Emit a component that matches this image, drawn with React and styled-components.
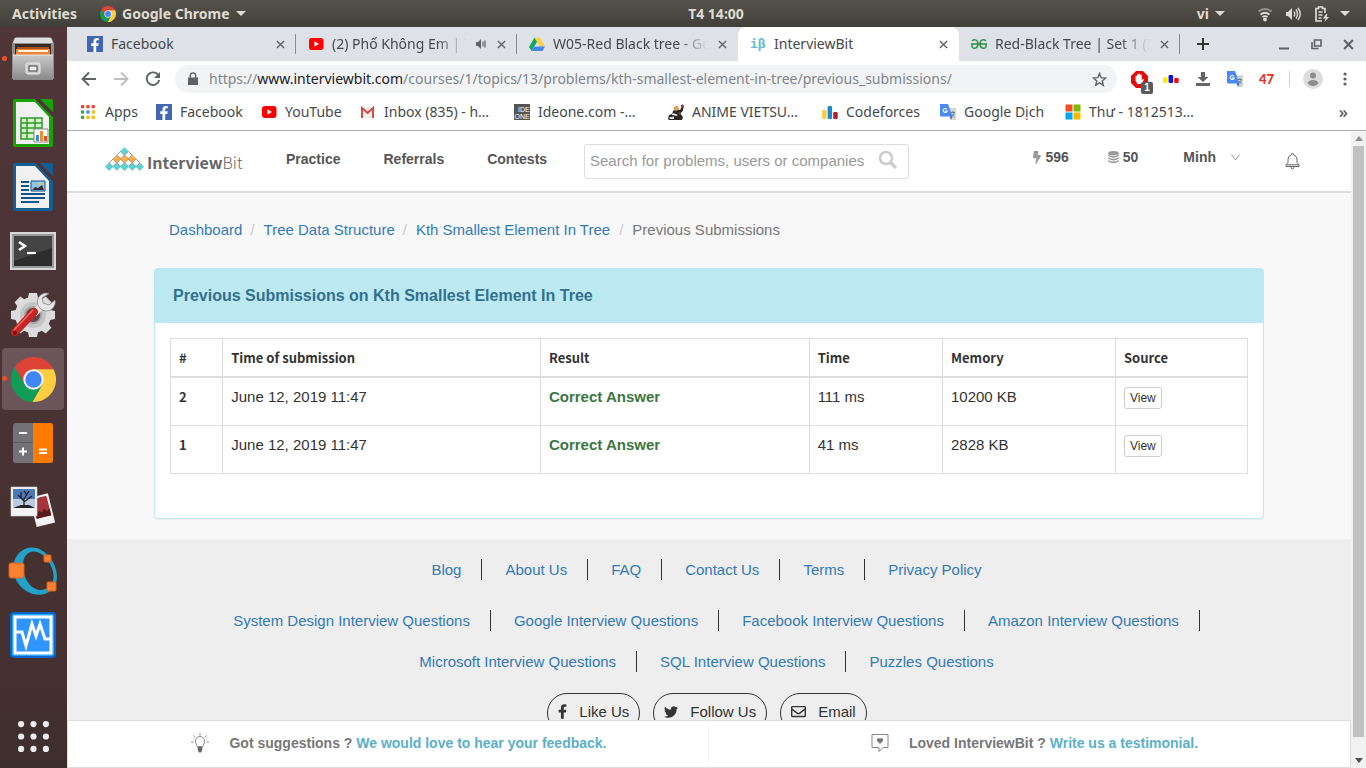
import React from "react";
import styled, { createGlobalStyle } from "styled-components";
import { FaFacebookF, FaTwitter, FaBolt, FaRegEnvelope } from "react-icons/fa";

const UI = `"Noto Sans", "Open Sans", sans-serif`;
const WEB = `"Liberation Sans", Arial, sans-serif`;

const Global = createGlobalStyle`
  * { box-sizing: border-box; }
  html, body { margin: 0; height: 100%; }
  #root { height: 100%; }
  body { font-family: ${WEB}; font-size: 15px; color: #333; overflow: hidden; }
  button, input { font: inherit; color: inherit; }
  button { background: none; border: 0; padding: 0; }
  svg { display: block; flex: none; }
  a { text-decoration: none; color: #337ab7; }
`;

/* ---------- desktop ---------- */
const Desktop = styled.div`
  display: flex; flex-direction: column; height: 100vh; background: #40302f;
`;
const TopBar = styled.header`
  display: grid; grid-template-columns: 1fr auto 1fr; align-items: center; flex: none;
  height: 27px; padding: 0 16px 0 12px;
  background: linear-gradient(#56534b, #403f3a);
  color: #dfdbd2; font: 700 14px/20px ${UI};
`;
const BarGroup = styled.div`
  display: flex; align-items: center; justify-content: ${(p) => (p.$end ? "flex-end" : "flex-start")};
`;
const BarItem = styled.button`
  display: flex; align-items: center; gap: 6px; margin-left: ${(p) => p.$gap || 0}px;
`;
const Caret = styled.span`
  width: 0; height: 0; border: 5px solid transparent; border-top-color: #dfdbd2; border-bottom: 0;
`;
const Work = styled.div`display: flex; flex: 1; min-height: 0;`;
const Dock = styled.nav`
  display: flex; flex-direction: column; flex: none; width: 67px; padding: 0 2px;
  background: linear-gradient(#503639, #43302f 90%, #3d2e2e);
`;
const DockItem = styled.button`
  position: relative; display: flex; align-items: center; justify-content: center;
  width: 62px; height: 62px; margin: 1px 0; border-radius: 4px; flex: none;
  background: ${(p) => (p.$active ? "#6b5558" : "transparent")};
  &::before {
    content: ""; position: absolute; left: 0; top: 28px; width: 5px; height: 5px; border-radius: 50%;
    background: ${(p) => (p.$running ? "#e95420" : "transparent")};
  }
`;
const DockApps = styled(DockItem)`margin-top: auto;`;

/* ---------- browser ---------- */
const Browser = styled.div`display: flex; flex-direction: column; flex: 1; min-width: 0; background: #fff;`;
const TabStrip = styled.div`
  display: flex; align-items: stretch; height: 34px; padding-left: 8px; flex: none; background: #dee1e6;
`;
const Tab = styled.div`
  position: relative; display: flex; align-items: center; gap: 8px; flex: 0 1 221px; min-width: 0;
  padding: 0 10px 0 12px; color: #45494d; font: 14px/20px ${UI};
  border-radius: ${(p) => (p.$active ? "8px 8px 0 0" : "0")};
  background: ${(p) => (p.$active ? "#fff" : "transparent")};
  &::after {
    content: ""; position: absolute; right: 0; top: 7px; height: 20px; width: 1px;
    background: ${(p) => (p.$line ? "#878b90" : "transparent")};
  }
`;
const TabTitle = styled.button`
  flex: 1; min-width: 0; overflow: hidden; white-space: nowrap; text-align: left;
  mask-image: ${(p) => (p.$fade ? "linear-gradient(to left, transparent, #000 30px)" : "none")};
`;
const IconButton = styled.button`
  position: relative; display: flex; align-items: center; justify-content: center; flex: none;
  width: ${(p) => p.$w || 32}px; height: 28px; color: #5f6368;
`;
const Close = styled(IconButton)`width: 12px;`;
const WindowButtons = styled.div`display: flex; align-items: center; margin-left: auto; padding-right: 2px;`;
const Toolbar = styled.div`
  display: flex; align-items: center; height: 36px; padding: 0 5px 0 6px; flex: none;
`;
const Omnibox = styled.div`
  display: flex; align-items: center; flex: 1; min-width: 0; height: 28px; margin: 0 6px;
  padding: 0 2px 0 12px; border-radius: 14px; background: #f1f3f4;
`;
const Url = styled.div`
  flex: 1; min-width: 0; overflow: hidden; white-space: nowrap; margin-left: 10px;
  font: 14px/20px ${UI}; color: #80868b; outline: 0;
  b { font-weight: 400; color: #202124; }
`;
const Badge = styled.span`
  position: absolute; right: 2px; bottom: -1px; width: 12px; height: 12px; border-radius: 2px;
  background: #5b5b5b; color: #fff; font: 700 10px/12px ${WEB}; text-align: center;
`;
const Divider = styled.span`width: 1px; height: 16px; background: #cfd1d4; margin: 0 7px 0 6px;`;
const Bookmarks = styled.nav`
  display: flex; align-items: center; height: 34px; padding: 0 18px 3px 14px; flex: none;
  border-bottom: 1px solid #b0b0b0;
`;
const Bookmark = styled.a`
  display: flex; align-items: center; gap: 8px; flex: 0 1 ${(p) => p.$w}px; min-width: 0;
  color: #45494d; font: 14px/20px ${UI}; white-space: nowrap;
`;
const More = styled.button`margin-left: auto; color: #5f6368; font: 600 16px/20px ${UI};`;
const FbBox = styled.span`
  display: flex; align-items: flex-end; justify-content: flex-end; width: 16px; height: 16px; flex: none;
  padding-right: 1px; background: #4267b2; color: #fff;
`;

/* ---------- page ---------- */
const Viewport = styled.div`display: flex; flex: 1; min-height: 0;`;
const PageColumn = styled.div`display: flex; flex-direction: column; flex: 1; min-width: 0;`;
const Scroll = styled.div`flex: 1; min-height: 0; overflow: hidden; background: #f8f8f8;`;
const ScrollTrack = styled.div`
  display: flex; flex-direction: column; align-items: center; flex: none; width: 15px; background: #f1f1f1;
`;
const ScrollThumb = styled.div`flex: 1; width: 11px; background: #c1c1c1;`;
const ScrollArrow = styled.button`display: flex; justify-content: center; width: 15px; height: ${(p) => p.$h}px;
  align-items: ${(p) => (p.$end ? "flex-end" : "center")}; padding-bottom: ${(p) => (p.$end ? 5 : 0)}px;`;

const SiteHeader = styled.header`
  display: flex; align-items: center; height: 62px; padding: 0 51px 0 38px;
  background: #fff; border-bottom: 2px solid #ddd;
`;
const Logo = styled.a`display: flex; align-items: flex-end; gap: 3px; width: 181px; padding-bottom: 4px;`;
const LogoText = styled.span`
  font: 700 16px/20px "Noto Sans CJK SC", sans-serif; color: #666;
  i { font-style: normal; font-weight: 300; }
`;
const MainNav = styled.nav`
  display: flex; gap: 43px; width: 298px; padding-bottom: 4px;
  a { color: #555; font-weight: 700; font-size: 14px; line-height: 20px; }
`;
const SearchBox = styled.form`
  display: flex; align-items: center; width: 325px; height: 35px; padding: 0 10px 2px 5px;
  border: 1px solid #ddd; border-radius: 3px; background: #fff;
`;
const SearchInput = styled.input`
  flex: 1; min-width: 0; border: 0; outline: 0; padding: 0; background: none; font-size: 15px;
  &::placeholder { color: #999; opacity: 1; }
`;
const UserArea = styled.div`
  display: flex; align-items: center; margin-left: auto; padding-bottom: 8px;
  color: #555; font-weight: 700; font-size: 14px; line-height: 20px;
`;
const UserItem = styled.button`
  display: flex; align-items: center; gap: ${(p) => p.$gap || 4}px; margin-left: ${(p) => p.$left || 0}px;
  padding-top: ${(p) => p.$drop || 0}px;
`;
const Bolt = styled(FaBolt)`width: 8px; height: 13px; color: #999;`;
const Container = styled.main`max-width: 1110px; margin: 0 auto; padding: 26px 0 20px;`;
const Breadcrumb = styled.ol`
  display: flex; margin: 0 0 28px; padding: 0 15px; list-style: none; line-height: 21px; color: #777;
  li + li::before { content: "/"; color: #ccc; padding: 0 9px; }
  li + li { margin-left: -1px; }
  li:last-child { margin-left: 0; }
`;
const Panel = styled.section`
  border: 1px solid #bce8f1; border-radius: 4px; background: #fff; box-shadow: 0 1px 1px rgba(0, 0, 0, 0.05);
`;
const PanelTitle = styled.h1`
  margin: 0; padding: 17px 18px; background: #bce8f1; color: #31708f; font-size: 16px; line-height: 20px;
`;
const PanelBody = styled.div`padding: 15px 15px 44px;`;
const Table = styled.table`
  width: 100%; border-collapse: collapse; table-layout: fixed;
  th, td { border: 1px solid #ddd; padding: 8px; text-align: left; vertical-align: top; line-height: 21px; }
  th { font: 700 13px/21px "Noto Sans CJK SC", sans-serif; }
  thead th { height: 38px; border-bottom-width: 2px; }
  tbody th, td { height: 48px; }
`;
const Col = styled.col`width: ${(p) => p.$w}%;`;
const Verdict = styled.strong`color: #3c763d;`;
const ViewButton = styled.button`
  display: block; margin-top: 1px; padding: 1px 5px; border: 1px solid #ccc; border-radius: 3px;
  font-size: 12px; line-height: 18px; background: #fff;
`;
const Footer = styled.footer`background: #eee; padding: 20px 0 30px; min-height: 240px;`;
const LinkRow = styled.ul`
  display: flex; flex-wrap: wrap; justify-content: center; row-gap: 20px;
  max-width: 1110px; margin: 0 auto ${(p) => p.$below}px; padding: 0 2px 0 0; list-style: none;
  li { padding: 0 20px; margin-right: 3px; line-height: 21px; border-right: 1px solid #333; }
  li:last-child { border-right: 0; }
`;
const Social = styled.div`display: flex; justify-content: center; gap: 13px; padding-right: 4px;`;
const SocialLink = styled.a`
  display: flex; align-items: center; gap: 12px; height: 40px; padding: 0 10px 2px;
  border: 1px solid #333; border-radius: 20px; color: #333;
`;
const LikeIcon = styled(FaFacebookF)`width: 9px; height: 15px;`;
const FeedbackBar = styled.div`
  display: flex; align-items: center; height: 48px; flex: none; background: #fff; border: 1px solid #ddd;
`;
const FeedbackCell = styled.div`
  display: flex; align-items: center; justify-content: center; flex: none; width: 50%; height: 36px; gap: 20px;
  padding: 0 0 2px ${(p) => p.$shift}px; border-right: ${(p) => (p.$line ? "1px solid #eee" : "0")};
  font-weight: 700; font-size: 14px; color: #777;
  a { color: #5bb0c8; }
`;

/* ---------- small drawings ---------- */
const Chrome = ({ size }) => (
  <svg width={size} height={size} viewBox="2 2 44 44">
    {[["#db4437", 0], ["#ffcd40", 120], ["#0f9d58", 240]].map(([c, a]) => (
      <path key={c} fill={c} transform={`rotate(${a} 24 24)`} d="M24 24V14H43.6A22 22 0 0 0 5.55 12L15.34 29Z" />
    ))}
    <circle cx="24" cy="24" r="10" fill="#f1f1f1" />
    <circle cx="24" cy="24" r="8" fill="#4285f4" />
  </svg>
);
const Cross = ({ s = 10, w = 1.7 }) => (
  <svg width={s} height={s} viewBox="0 0 10 10" stroke="#5f6368" strokeWidth={w}><path d="M1 1l8 8M9 1l-8 8" /></svg>
);
const Facebook = () => <FbBox><FaFacebookF size={14} /></FbBox>;
const YouTube = () => (
  <svg width="16" height="16" viewBox="0 0 16 16"><rect x="1" y="2" width="14.500" height="12" rx="3" fill="red" /><path d="M6.500 5.300v5.200L11 7.900z" fill="#fff" /></svg>
);
const Drive = () => (
  <svg width="16" height="16" viewBox="0 0 16 16"><path d="M5.500 1.500L0 11l2.600 4L8.200 5.500z" fill="#11a861" /><path d="M5.500 1.500h5.200L16 10.500h-5.200z" fill="#ffcf48" /><path d="M5.200 10.500H16L13.400 15H2.600z" fill="#4285f4" /></svg>
);
const IbIcon = () => (
  <svg width="16" height="16" viewBox="0 0 16 16"><text x="0" y="12" fontFamily="DejaVu Sans Mono" fontWeight="700" fontSize="13" fill="#63bcd2">iβ</text></svg>
);
const Gfg = () => (
  <svg width="16" height="16" viewBox="0 0 16 16" fill="none" stroke="#2f8d46" strokeWidth="1.400"><path d="M0 8h16M1 5c1-1.800 6-2.200 6 3s-5 4.800-6 3V8M15 5c-1-1.800-6-2.200-6 3s5 4.800 6 3V8" /></svg>
);
const Translate = () => (
  <svg width="16" height="16" viewBox="0 0 16 16"><path d="M6 4h10v12h-6z" fill="#d5d5d5" /><path d="M0 0h8l4.500 12.500H1a1 1 0 0 1-1-1z" fill="#4a8af4" /><path d="M10 12.500h2.500L11 15.500z" fill="#2a56c6" /><path d="M6.800 5.200A2 2 0 1 0 7.200 7H5" fill="none" stroke="#fff" strokeWidth="1.100" /><path d="M10.500 8.500h4.500M12.800 7v1.500M14.300 8.800c-.4 1.700-1.500 2.800-2.800 3.500M11.800 10c.5 1 1.400 1.800 2.700 2.500" fill="none" stroke="#607988" strokeWidth=".9" /></svg>
);
const Bars = ({ colors = ["#ffcb4f", "#1f8acb", "#b81f2d"], small }) => (
  <svg width="16" height="16" viewBox="0 0 16 16">
    <rect x="0" y="6" width="4.500" height={small ? 6 : 9} rx="1.200" fill={colors[0]} />
    <rect x="5.600" y={small ? 4 : 2} width="4.500" height={small ? 8 : 13} rx="1.200" fill={colors[1]} />
    <rect x="11.200" y={small ? 7 : 8} width="4.500" height={small ? 5 : 7} rx="1.200" fill={colors[2]} />
  </svg>
);
const AppsGrid = ({ size, colors, r }) => (
  <svg width={size} height={size} viewBox="0 0 15 15">
    {[0, 1, 2].map((y) => [0, 1, 2].map((x) => r
      ? <circle key={x + "" + y} cx={1.5 + x * 6} cy={1.5 + y * 6} r="1.500" fill="#eee" />
      : <rect key={x + "" + y} x={x * 5} y={1 + y * 5} width="3" height="3" fill={colors[y * 3 + x]} />))}
  </svg>
);
const Gmail = () => (
  <svg width="16" height="16" viewBox="0 0 16 16"><path d="M1 3h13v11H1z" fill="#eee" /><path d="M2 14V4l5.500 5L13 4v10" fill="none" stroke="#d54b3d" strokeWidth="2" /></svg>
);
const Ideone = () => (
  <svg width="16" height="16" viewBox="0 0 16 16"><path d="M0 0h16v16H0z" fill="#555" /><g fill="#fff" fontFamily="Liberation Sans" fontSize="7"><text x="4" y="7.500">IDE</text><text x="0.500" y="14.500">ONE</text></g></svg>
);
const Anime = () => (
  <svg width="16" height="16" viewBox="0 0 16 16">
    <path d="M5 7l3-2 4 1 3-5 .8 1-1 5-2.500 2.500L15 13l-1 3H1l-1-1 1-4 3-1z" fill="#2b2523" />
    <path d="M5.500 3.500l3-2 2 1.500.5 2.500-3 1.500-2-1z" fill="#e2a052" /><path d="M13 1l2-.8.5 3-2 1.500z" fill="#8f3540" />
    <path d="M4.500 9l5 1.500-.5 1.500-5-1zM1 13.500l5-1V15H2z" fill="#e6e6e6" /><path d="M10.500 8l2.500 1-1.500 2z" fill="#c03d2b" />
  </svg>
);
const Microsoft = () => (
  <svg width="16" height="16" viewBox="0 0 16 16"><path d="M.5.5h7v7h-7z" fill="#f25022" /><path d="M8.500.5h7v7h-7z" fill="#7fba00" /><path d="M.5 8.500h7v7h-7z" fill="#00a4ef" /><path d="M8.500 8.500h7v7h-7z" fill="#ffb900" /></svg>
);
const Arrow = ({ flip, color }) => (
  <svg width="16" height="16" viewBox="0 0 16 16" fill="none" stroke={color} strokeWidth="1.900"><path transform={flip ? "rotate(180 8 8)" : undefined} d="M15 8H2M8 1.500L1.500 8 8 14.500" /></svg>
);

const Lattice = () => {
  const d = (x, y) => `M${x} ${y - 3.8}L${x + 3.8} ${y}L${x} ${y + 3.8}L${x - 3.8} ${y}Z`;
  const row = (n, y) => Array.from({ length: n }, (_, i) => d(19.5 + (i - (n - 1) / 2) * 7.7, y)).join("");
  return (
    <svg width="39" height="25" viewBox="0 0 39 25">
      <g fill="#fff" stroke="#777" strokeWidth=".8"><path d={row(2, 8.1)} /><path d={row(4, 15.800)} /></g>
      <path d={row(1, 4.300)} fill="#56d5d8" stroke="#6aa" strokeWidth=".5" />
      <path d={row(3, 12)} fill="#ffb03c" stroke="#a86" strokeWidth=".5" />
      <path d={row(5, 19.700)} fill="#56d5d8" stroke="#6aa" strokeWidth=".5" />
    </svg>
  );
};

/* ---------- dock drawings ---------- */
const Files = () => (
  <svg width="48" height="48" viewBox="0 0 48 48">
    <defs><linearGradient id="fg" x2="0" y2="1"><stop stopColor="#c9c9c9" /><stop offset="1" stopColor="#8a8a8a" /></linearGradient></defs>
    <path d="M5 4q1-2 3-2h32q2 0 3 2l2 5v35H3V9z" fill="#8f8f8f" /><path d="M6 3h36l2 5H4z" fill="#ddd" />
    <path d="M6 9h36v12H6z" fill="#3a2b20" /><path d="M8 12h32v2H8z" fill="#a8501e" /><path d="M7 14h34v7H7z" fill="#e8853a" /><path d="M9 15h30v2H9z" fill="#fff0d8" />
    <path d="M4 20h40v25H4z" fill="url(#fg)" /><path d="M4 20h40" stroke="#e8e8e8" />
    <rect x="17" y="28" width="14" height="11" rx="2" fill="#ccc" stroke="#eee" /><rect x="20" y="31" width="8" height="5" fill="#eee" stroke="#444" />
  </svg>
);
const Doc = ({ color, children }) => (
  <svg width="48" height="48" viewBox="0 0 48 48">
    <path d="M6 0h20l18 18v28q0 2-2 2H6q-2 0-2-2V2q0-2 2-2z" fill={color} /><path d="M31 0h11q2 0 2 2v11z" fill={color} />
    <path d="M28 0L44 17" stroke="#4a3638" strokeWidth="2" /><path d="M7 3h19l14 15v27H7z" fill="#f1f1f1" />{children}
  </svg>
);
const Calc = () => (
  <Doc color="#18a303">
    <path d="M12 19h21v21H12zM12 24h21M12 29h21M12 34h21M18 19v21M26 19v21" fill="#d7f3c8" stroke="#2e9a2e" strokeWidth="1.500" />
    <path d="M25 30h14v13H25z" fill="#fff" stroke="#888" /><path d="M27 36h3v6h-3z" fill="#3391d6" /><path d="M31 32h3v10h-3z" fill="#f6892b" /><path d="M35 37h3v5h-3z" fill="#d6552b" />
  </Doc>
);
const Writer = () => (
  <Doc color="#0e6097">
    <path d="M12 19h8M12 23h8M12 27h8M12 31h24M12 35h24M12 39h18" stroke="#12558a" strokeWidth="2" /><path d="M22 18h14v10H22z" fill="#8fc6f0" stroke="#12558a" /><path d="M23 27l3-3 3 1 4-3 2 5z" fill="#333" /><circle cx="31" cy="21" r="1.500" fill="#ffc92b" />
  </Doc>
);
const Terminal = () => (
  <svg width="48" height="40" viewBox="0 0 48 40"><path d="M1 1h46v38H1z" fill="#d8d8d8" /><path d="M3 3h42v34H3z" fill="#999" /><path d="M5 5h38v30H5z" fill="#2d2d2d" /><path d="M5 5h38v12L5 30z" fill="#444" /><path d="M10 11l6 4-6 4" fill="none" stroke="#fff" strokeWidth="2.500" /><path d="M18 22h9" stroke="#fff" strokeWidth="2.200" /></svg>
);
const Settings = () => (
  <svg width="48" height="48" viewBox="0 0 48 48">
    <g fill="#dcdcdc">{[0, 45, 90, 135].map((a) => <path key={a} transform={`rotate(${a} 24 24)`} d="M20 2h8l1 5v34l-1 5h-8l-1-5V7z" />)}<circle cx="24" cy="24" r="18" /></g>
    <circle cx="24" cy="24" r="13" fill="#c4c4c4" /><circle cx="24" cy="24" r="8" fill="#5b4548" stroke="#a2a2a2" strokeWidth="2" />
    <path d="M25 23l7-8" stroke="#e8e8e8" strokeWidth="7" />
    <path d="M6 41L25 21" stroke="#c62525" strokeWidth="8" strokeLinecap="round" /><path d="M5 39L24 19" stroke="#f06a60" strokeWidth="1.500" />
    <path d="M40 2.500a9 9 0 1 0 6 6.500l-6 5-6-2-1-5z" fill="#e6e6e6" stroke="#888" strokeWidth=".8" /><circle cx="6" cy="42" r="2" fill="#7d1212" />
  </svg>
);
const Calculator = () => (
  <svg width="40" height="40" viewBox="0 0 40 40"><rect width="40" height="40" rx="3" fill="#727277" /><path d="M20 0h17q3 0 3 3v34q0 3-3 3H20z" fill="#ff7b00" /><path d="M0 19.500h20" stroke="#5b5b60" /><path d="M6 10h8M6 28.500h8M10 24.500v8M26 26.500h8M26 30h8" stroke="#fff" strokeWidth="2" /></svg>
);
const Photos = () => (
  <svg width="48" height="48" viewBox="0 0 48 48">
    <g transform="rotate(-14 34 28)"><path d="M24 12h19v30H24z" fill="#f3f3f3" /><path d="M26 14h15v20H26z" fill="#a5343b" /><path d="M26 34v-6l2 2 2-3 3 2 2-3 3 3 3-2v7z" fill="#571a20" /></g>
    <path d="M2 4h26v29H2z" fill="#f4f4f4" stroke="#ccc" strokeWidth=".6" /><path d="M4 6h22v19H4z" fill="#4a78b8" /><path d="M4 16h22v9H4z" fill="#b9cbe0" /><path d="M4 25l8-3h8l6 3z" fill="#222" /><path d="M15 23v-8M15 18l-6-6M15 16l5-8M15 19l8-6M12 15V9M18 12l-3-4" stroke="#1a1a1a" strokeWidth="1.200" />
  </svg>
);
const Octave = () => (
  <svg width="50" height="50" viewBox="0 0 50 50"><path d="M5 22C6 6 20-3 33 4 48 12 54 34 44 44 30 56 6 44 5 22zm10 2C18 40 30 48 39 42 50 36 46 20 36 10 24 0 13 8 15 24z" fill="#23a2c8" fillRule="evenodd" /><rect x="1" y="17" width="15" height="15" rx="2" fill="#ff8030" stroke="#d3611c" /><rect x="36" y="9" width="7" height="7" rx="1" fill="#ff8030" stroke="#d3611c" /><rect x="39" y="36" width="9" height="9" rx="1" fill="#ff8030" stroke="#d3611c" /></svg>
);
const Monitor = () => (
  <svg width="46" height="46" viewBox="0 0 46 46"><rect width="46" height="46" rx="4" fill="#0a65c8" /><rect x="2" y="2" width="42" height="42" rx="2" fill="#2aa4fa" /><path d="M5 5h36v36H5z" fill="#2e95ff" stroke="#fff" strokeWidth="3" /><path d="M6 20h6l4 14 6-22 4 12 4-12 5 15h5" fill="none" stroke="#fff" strokeWidth="3" /></svg>
);

const tabs = [
  { icon: <Facebook />, title: "Facebook", line: true },
  { icon: <YouTube />, title: "(2) Phố Không Em | T", line: true, fade: true, audio: true },
  { icon: <Drive />, title: "W05-Red Black tree - Go", fade: true },
  { icon: <IbIcon />, title: "InterviewBit", active: true },
  { icon: <Gfg />, title: "Red-Black Tree | Set 1 (In", fade: true, line: true },
];
const bookmarks = [
  [75, "Apps", <AppsGrid size={16} colors={["#ea4335", "#ea4335", "#ea4335", "#34a853", "#4285f4", "#fbbc05", "#34a853", "#fbbc05", "#fbbc05"]} />],
  [105, "Facebook", <Facebook />],
  [99, "YouTube", <YouTube />],
  [154, "Inbox (835) - h…", <Gmail />],
  [154, "Ideone.com -…", <Ideone />],
  [154, "ANIME VIETSU…", <Anime />],
  [118, "Codeforces", <Bars />],
  [125, "Google Dịch", <Translate />],
  [154, "Thư - 1812513…", <Microsoft />],
];
const dock = [
  ["Files", <Files />, true], ["Calc", <Calc />], ["Writer", <Writer />], ["Terminal", <Terminal />],
  ["Settings", <Settings />], ["Chrome", <Chrome size={45} />, true, true], ["Calculator", <Calculator />],
  ["Photos", <Photos />], ["Octave", <Octave />], ["System Monitor", <Monitor />],
];
const columns = [["#", 4.85], ["Time of submission", 29.5], ["Result", 24.95], ["Time", 12.38], ["Memory", 16.06], ["Source", 12.26]];
const rows = [
  { id: 2, when: "June 12, 2019 11:47", time: "111 ms", memory: "10200 KB" },
  { id: 1, when: "June 12, 2019 11:47", time: "41 ms", memory: "2828 KB" },
];
const siteLinks = ["Blog", "About Us", "FAQ", "Contact Us", "Terms", "Privacy Policy"];
const questionLinks = ["System Design Interview Questions", "Google Interview Questions", "Facebook Interview Questions",
  "Amazon Interview Questions", "Microsoft Interview Questions", "SQL Interview Questions", "Puzzles Questions"];

function SystemBar() {
  return (
    <TopBar>
      <BarGroup>
        <BarItem>Activities</BarItem>
        <BarItem $gap={23}><Chrome size={16} />Google Chrome<Caret /></BarItem>
      </BarGroup>
      <BarItem $gap={70}>T4 14:00</BarItem>
      <BarGroup $end>
        <BarItem>vi<Caret /></BarItem>
        <BarItem $gap={32} aria-label="Network">
          <svg width="16" height="16" viewBox="0 0 16 16" fill="none" stroke="#dfdbd2" strokeWidth="1.800"><path d="M1.500 5.500q6.500-5 13 0" opacity=".5" /><path d="M3.500 8.500q4.500-3.500 9 0M5.500 11q2.500-1.800 5 0" /><circle cx="8" cy="13.500" r="1" fill="#dfdbd2" /></svg>
        </BarItem>
        <BarItem $gap={12} aria-label="Volume">
          <svg width="16" height="16" viewBox="0 0 16 16" fill="none" stroke="#dfdbd2" strokeWidth="1.400"><path d="M1 6h2l4-4v12l-4-4H1z" fill="#dfdbd2" stroke="none" /><path d="M9 5.500q1.500 2.500 0 5M11 3.500q3 4.500 0 9M13 2q4.500 6 0 12" /></svg>
        </BarItem>
        <BarItem $gap={13} aria-label="Battery">
          <svg width="16" height="18" viewBox="0 0 16 18" fill="none" stroke="#dfdbd2" strokeWidth="1.700"><path d="M8 16H2V3.500h2.500V2h4v1.500H11V8M4.500 7h4M4.500 10h4M4.500 13h3" /><path d="M12 9l-3 4.500h2.500L10.500 17l4.500-5h-2.500l1-3z" fill="#dfdbd2" stroke="none" /></svg>
        </BarItem>
        <BarItem $gap={10} aria-label="Menu"><Caret /></BarItem>
      </BarGroup>
    </TopBar>
  );
}

function BrowserChrome() {
  return (
    <>
      <TabStrip>
        {tabs.map((t) => (
          <Tab key={t.title} $active={t.active} $line={t.line}>
            {t.icon}
            <TabTitle $fade={t.fade}>{t.title}</TabTitle>
            {t.audio && <svg width="12" height="12" viewBox="0 0 12 12" fill="none" stroke="#5f6368"><path d="M1 4h2l3-3v10L3 8H1z" fill="#5f6368" stroke="none" /><path d="M8 3.500v5M10 2.500v7" strokeWidth="1.200" /></svg>}
            <Close aria-label="Close tab"><Cross s={9} w={1.500} /></Close>
          </Tab>
        ))}
        <IconButton $w={46} aria-label="New tab"><svg width="12" height="34" viewBox="0 0 12 34" stroke="#333" strokeWidth="2"><path d="M6 14v12M0 20h12" /></svg></IconButton>
        <WindowButtons>
          <IconButton aria-label="Minimise"><svg width="10" height="12" viewBox="0 0 10 12"><path d="M0 10.500h10" stroke="#5f6368" strokeWidth="2" /></svg></IconButton>
          <IconButton aria-label="Restore"><svg width="11" height="11" viewBox="0 0 11 11" fill="none" stroke="#5f6368" strokeWidth="1.600"><path d="M3.500 1h6.500v6H3.500zM1 3v6.500h6.500" /></svg></IconButton>
          <IconButton aria-label="Close window"><Cross s={11} w={1.900} /></IconButton>
        </WindowButtons>
      </TabStrip>
      <Toolbar>
        <IconButton aria-label="Back"><Arrow color="#5f6368" /></IconButton>
        <IconButton aria-label="Forward"><Arrow flip color="#bcbec1" /></IconButton>
        <IconButton aria-label="Reload"><svg width="16" height="16" viewBox="0 0 16 16" fill="none" stroke="#5f6368" strokeWidth="1.900"><path d="M13.500 4.500A6.300 6.300 0 1 0 14.200 9" /><path d="M15 1v6H9z" fill="#5f6368" stroke="none" /></svg></IconButton>
        <Omnibox>
          <svg width="12" height="14" viewBox="0 0 12 14"><path d="M1 5.500h10V13H1z" fill="#5f6368" /><path d="M3.300 6V3.600a2.700 2.700 0 0 1 5.400 0V6" fill="none" stroke="#5f6368" strokeWidth="1.400" /></svg>
          <Url role="textbox" aria-label="Address" contentEditable suppressContentEditableWarning spellCheck={false}>https://<b>www.interviewbit.com</b>/courses/1/topics/13/problems/kth-smallest-element-in-tree/previous_submissions/</Url>
          <IconButton aria-label="Bookmark this page"><svg width="15" height="15" viewBox="0 0 15 15" fill="none" stroke="#5f6368" strokeWidth="1.400"><path d="M7.500 1.500l1.700 4.200 4.500.3-3.500 2.900 1.100 4.400-3.800-2.400-3.800 2.400 1.100-4.400L1.300 6l4.500-.3z" /></svg></IconButton>
        </Omnibox>
        <IconButton aria-label="AdBlock">
          <svg width="17" height="17" viewBox="0 0 17 17"><path d="M5 0h7l5 5v7l-5 5H5l-5-5V5z" fill="#e30c0c" /><path d="M4.500 9.500V5.200q.8-1 1.500 0V3.500q.9-1 1.600 0V3q.9-1 1.600 0v.8q.9-.8 1.500 0V9l1.300-1q1 0 .7.900l-2 4.100H6.500z" fill="#fff" /></svg>
          <Badge>1</Badge>
        </IconButton>
        <IconButton aria-label="Contest list"><Bars small colors={["#fff000", "#1010e0", "#f01010"]} /></IconButton>
        <IconButton aria-label="Download"><svg width="16" height="16" viewBox="0 0 16 16" fill="#666"><path d="M6 1h4v5h3.500L8 11 2.500 6H6zM1 12h14v3H1z" /></svg></IconButton>
        <IconButton aria-label="Translate"><Translate /></IconButton>
        <IconButton aria-label="Counter"><svg width="16" height="16" viewBox="0 0 16 16"><text x="0" y="13" fontFamily="Lato" fontWeight="900" fontSize="13" fill="#e8301c">47</text></svg></IconButton>
        <Divider />
        <IconButton aria-label="Profile"><svg width="20" height="20" viewBox="0 0 20 20"><circle cx="10" cy="10" r="10" fill="#dcdcdc" /><circle cx="10" cy="6.500" r="3" fill="#8d8d8d" /><path d="M4.500 14q1.500-3 5.500-3t5.500 3q-2 3-5.500 3t-5.500-3z" fill="#8d8d8d" /></svg></IconButton>
        <IconButton aria-label="Menu"><svg width="4" height="14" viewBox="0 0 4 14" fill="#5f6368"><circle cx="2" cy="2" r="1.600" /><circle cx="2" cy="7" r="1.600" /><circle cx="2" cy="12" r="1.600" /></svg></IconButton>
      </Toolbar>
      <Bookmarks>
        {bookmarks.map(([w, label, icon]) => <Bookmark key={label} href="#" $w={w}>{icon}{label}</Bookmark>)}
        <More>»</More>
      </Bookmarks>
    </>
  );
}

function Site() {
  return (
    <Scroll>
      <SiteHeader>
        <Logo href="#"><Lattice /><LogoText>Interview<i>Bit</i></LogoText></Logo>
        <MainNav><a href="#">Practice</a><a href="#">Referrals</a><a href="#">Contests</a></MainNav>
        <SearchBox>
          <SearchInput aria-label="Search" placeholder="Search for problems, users or companies" />
          <svg width="20" height="20" viewBox="0 0 20 20" fill="none" stroke="#ccc"><circle cx="8" cy="8" r="6" strokeWidth="2.500" /><path d="M12.500 12.500l5.500 5.500" strokeWidth="3.200" /></svg>
        </SearchBox>
        <UserArea>
          <UserItem><Bolt />596</UserItem>
          <UserItem $left={39}>
            <svg width="11" height="13" viewBox="0 0 11 13" fill="#999"><ellipse cx="5.500" cy="2.200" rx="5.300" ry="2.100" />{[3.5, 6.3, 9.1].map((y) => <path key={y} d={`M.2 ${y}q5.300 3 10.600 0v1.400q-5.300 3.600-10.600 0z`} />)}</svg>50
          </UserItem>
          <UserItem $left={45} $gap={15}>Minh<svg width="9" height="7" viewBox="0 0 9 7" fill="none" stroke="#999"><path d="M.5.5l4 5.500 4-5.500" /></svg></UserItem>
          <UserItem $left={45} $drop={8} aria-label="Notifications">
            <svg width="15" height="17" viewBox="0 0 15 17" fill="none" stroke="#666"><path d="M1 13.500h13v-1.500l-2-2.500V6q-.5-3.500-3.500-4.200v-1h-2v1Q3.500 2.500 3 6v3.500L1 12zM1.500 11.800h12M6 14q0 2 1.500 2T9 14" /></svg>
          </UserItem>
        </UserArea>
      </SiteHeader>
      <Container>
        <Breadcrumb>
          <li><a href="#">Dashboard</a></li><li><a href="#">Tree Data Structure</a></li>
          <li><a href="#">Kth Smallest Element In Tree</a></li><li>Previous Submissions</li>
        </Breadcrumb>
        <Panel>
          <PanelTitle>Previous Submissions on Kth Smallest Element In Tree</PanelTitle>
          <PanelBody>
            <Table>
              <colgroup>{columns.map(([name, w]) => <Col key={name} $w={w} />)}</colgroup>
              <thead><tr>{columns.map(([name]) => <th key={name} scope="col">{name}</th>)}</tr></thead>
              <tbody>
                {rows.map((r) => (
                  <tr key={r.id}>
                    <th scope="row">{r.id}</th><td>{r.when}</td><td><Verdict>Correct Answer</Verdict></td>
                    <td>{r.time}</td><td>{r.memory}</td><td><ViewButton>View</ViewButton></td>
                  </tr>
                ))}
              </tbody>
            </Table>
          </PanelBody>
        </Panel>
      </Container>
      <Footer>
        <LinkRow $below={30}>{siteLinks.map((l) => <li key={l}><a href="#">{l}</a></li>)}</LinkRow>
        <LinkRow $below={21}>{questionLinks.map((l) => <li key={l}><a href="#">{l}</a></li>)}</LinkRow>
        <Social>
          <SocialLink href="#"><LikeIcon />Like Us</SocialLink>
          <SocialLink href="#"><FaTwitter size={14} />Follow Us</SocialLink>
          <SocialLink href="#"><FaRegEnvelope size={15} />Email</SocialLink>
        </Social>
      </Footer>
    </Scroll>
  );
}

function Feedback() {
  return (
    <FeedbackBar>
      <FeedbackCell $line $shift={22}>
        <svg width="18" height="20" viewBox="0 0 18 20" fill="none" stroke="#888"><path d="M6.500 13.500Q4.500 11 4.500 8a4.500 4.500 0 0 1 9 0q0 3-2 5.500z" /><path d="M6.500 14h5l-.5 4-1 1.500H8L7 18z" fill="#666" stroke="none" /><path d="M9 0v2.500M2.500 2.500l1.500 2M15.500 2.500l-1.500 2M0 9h2.500M15.500 9H18" /></svg>
        <span>Got suggestions ? <a href="#">We would love to hear your feedback.</a></span>
      </FeedbackCell>
      <FeedbackCell $shift={10}>
        <svg width="18" height="20" viewBox="0 0 18 20" fill="none" stroke="#888"><path d="M1 1.500h16v13h-5l-4 4v-4H1z" /><path d="M9 11L5.800 7.500Q5.500 5 7.500 5 8.500 5 9 6q.5-1 1.500-1 2 0 1.700 2.500z" fill="#777" stroke="none" /></svg>
        <span>Loved InterviewBit ? <a href="#">Write us a testimonial.</a></span>
      </FeedbackCell>
    </FeedbackBar>
  );
}

export default function App() {
  return (
    <Desktop>
      <Global />
      <SystemBar />
      <Work>
        <Dock>
          {dock.map(([name, icon, running, active]) => (
            <DockItem key={name} aria-label={name} $running={running} $active={active}>{icon}</DockItem>
          ))}
          <DockApps aria-label="Show applications"><AppsGrid size={31} r /></DockApps>
        </Dock>
        <Browser>
          <BrowserChrome />
          <Viewport>
            <PageColumn><Site /><Feedback /></PageColumn>
            <ScrollTrack>
              <ScrollArrow $h={15} aria-label="Scroll up"><svg width="8" height="5" viewBox="0 0 8 5"><path d="M0 5l4-5 4 5z" fill="#8f8f8f" /></svg></ScrollArrow>
              <ScrollThumb />
              <ScrollArrow $h={31} $end aria-label="Scroll down"><svg width="8" height="5" viewBox="0 0 8 5"><path d="M0 0l4 5 4-5z" fill="#505050" /></svg></ScrollArrow>
            </ScrollTrack>
          </Viewport>
        </Browser>
      </Work>
    </Desktop>
  );
}
